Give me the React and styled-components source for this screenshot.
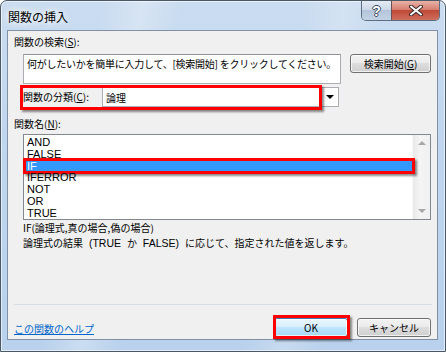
import styled, { createGlobalStyle } from "styled-components";

const Global = createGlobalStyle`
  html, body { margin: 0; padding: 0; }
  body {
    width: 446px;
    height: 352px;
    overflow: hidden;
    font-family: "Noto Sans CJK JP", "Liberation Sans", sans-serif;
    font-size: 10px;
    color: #000;
  }
`

const Window = styled.div`
  box-sizing: border-box;
  width: 446px;
  height: 352px;
  border: 1px solid #4a5868;
  border-radius: 7px 7px 0 0;
  background:
    linear-gradient(100deg, rgba(255,255,255,0) 20%, rgba(255,255,255,0.25) 28%, rgba(255,255,255,0) 36%, rgba(255,255,255,0) 60%, rgba(255,255,255,0.2) 68%, rgba(255,255,255,0) 76%),
    linear-gradient(180deg, #cadcf0 0%, #c0d6ee 40%, #b9d1ec 100%);
  display: flex;
  flex-direction: column;
  box-shadow: inset 0 0 0 1px rgba(255,255,255,0.6);
`

const TitleBar = styled.div`
  height: 29px;
  display: flex;
  padding-left: 7px;
`

const Title = styled.div`
  align-self: center;
  margin-top: 2px;
  font-size: 12px;
  text-shadow: 0 0 6px #fff, 0 0 10px #fff;
`

const CaptionButtons = styled.div`
  margin-left: auto;
  margin-right: 5px;
  display: flex;
  height: 19px;
  border: 1px solid #5e6e82;
  border-top: none;
  border-radius: 0 0 5px 5px;
  overflow: hidden;
`

const CaptionButton = styled.div`
  width: ${p => p.$w}px;
  display: flex;
  align-items: center;
  justify-content: center;
  background: ${p => p.$close
    ? "linear-gradient(180deg, #e8b3a8 0%, #d67f70 45%, #c04a38 50%, #cf6e5c 100%)"
    : "linear-gradient(180deg, #e3ebf5 0%, #cdd9e8 45%, #b4c5da 50%, #c3d3e6 100%)"};
  border-left: ${p => p.$close ? "1px solid #6b4f55" : "none"};
  color: #fff;
  font-family: "Liberation Sans", sans-serif;
  font-weight: bold;
  font-size: 14px;
  text-shadow: 1px 0 #3d4b5c, -1px 0 #3d4b5c, 0 1px #3d4b5c, 0 -1px #3d4b5c;
`

const Client = styled.div`
  flex: 1;
  margin: 0 7px 11px 6px;
  border: 1px solid #8090a5;
  background: #f0f0f0;
  display: flex;
  flex-direction: column;
  padding: 4px 6px 2px 6px;
`

const SectionLabel = styled.div`
  height: 13px;
  line-height: 13px;
  margin-top: ${p => p.$mt || 0}px;
`

const Indented = styled.div`
  margin-left: 9px;
  margin-top: ${p => p.$mt || 0}px;
  display: flex;
  position: relative;
`

const SearchBox = styled.div`
  box-sizing: border-box;
  width: 318px;
  height: 30px;
  background: #fff;
  border: 1px solid #abadb3;
  border-top-color: #8e9096;
  padding: 2px 3px;
  line-height: 13px;
  white-space: nowrap;
  letter-spacing: -0.25px;
  overflow: hidden;
`

const Button = styled.div`
  box-sizing: border-box;
  width: ${p => p.$w}px;
  height: ${p => p.$h || 19}px;
  margin-left: ${p => p.$ml || 0}px;
  border: 1px solid ${p => p.$default ? "#3c7fb1" : "#707070"};
  border-radius: 3px;
  background: ${p => p.$default
    ? "linear-gradient(180deg, #eaf6fd 0%, #d9f0fc 45%, #bee6fd 50%, #a7d9f5 100%)"
    : "linear-gradient(180deg, #f2f2f2 0%, #ebebeb 45%, #dddddd 50%, #cfcfcf 100%)"};
  box-shadow: inset 0 0 0 1px rgba(255,255,255,0.7);
  display: flex;
  align-items: center;
  justify-content: center;
  position: relative;
`

const Combo = styled.div`
  box-sizing: border-box;
  width: 237px;
  height: 20px;
  background: #fff;
  border: 1px solid #abadb3;
  display: flex;
  align-items: center;
  padding-left: 3px;
`

const ComboLabel = styled.div`
  width: 79px;
  height: 20px;
  line-height: 20px;
`

const DropArrow = styled.div`
  margin-left: auto;
  width: 14px;
  height: 16px;
  margin-right: 1px;
  display: flex;
  align-items: center;
  justify-content: center;
  &::after {
    content: "";
    border-left: 4px solid transparent;
    border-right: 4px solid transparent;
    border-top: 4px solid #000;
  }
`

const Annotation = styled.div`
  position: absolute;
  top: ${p => p.$t}px;
  left: ${p => p.$l}px;
  width: ${p => p.$w}px;
  height: ${p => p.$h}px;
  box-sizing: border-box;
  border: 3px solid #f00;
  box-shadow: 2px 2px 2px rgba(0,0,0,0.45);
  pointer-events: none;
`

const ListBox = styled.div`
  box-sizing: border-box;
  width: 408px;
  height: 86px;
  background: #fff;
  border: 1px solid #828790;
  display: flex;
`

const ListItems = styled.div`
  flex: 1;
  padding-top: 1px;
  font-family: "Liberation Sans", sans-serif;
  font-size: 11px;
`

const ListItem = styled.div`
  height: 11.8px;
  line-height: 12px;
  padding-left: 3px;
  position: relative;
  background: ${p => p.$selected ? "#3399ff" : "transparent"};
  color: ${p => p.$selected ? "#fff" : "#000"};
`

const ScrollBar = styled.div`
  width: 17px;
  background: linear-gradient(90deg, #e8e8e8, #f4f4f4 40%, #f0f0f0);
  border-left: 1px solid #f7f7f7;
  display: flex;
  flex-direction: column;
  justify-content: space-between;
  align-items: center;
  padding: 6px 0;
`

const ScrollArrow = styled.div`
  width: 0;
  height: 0;
  border-left: 4px solid transparent;
  border-right: 4px solid transparent;
  ${p => p.$down ? "border-top: 4px solid #a8a8a8;" : "border-bottom: 4px solid #a8a8a8;"}
`

const Description = styled.div`
  margin: 1px 0 0 9px;
  display: flex;
  flex-direction: column;
`

const DescLine = styled.div`
  height: 14.5px;
  line-height: 14.5px;
  white-space: nowrap;
`

const Latin = styled.span`
  font-family: "Liberation Sans", sans-serif;
  font-size: 10.5px;
  word-spacing: 3px;
`

const Spacer = styled.div`
  flex: 1;
`

const Separator = styled.div`
  height: 1px;
  background: #d5dfe5;
  margin-right: -1px;
`

const BottomRow = styled.div`
  margin-top: 13px;
  display: flex;
  align-items: center;
`

const HelpLink = styled.a`
  color: #0066cc;
  text-decoration: underline;
  margin-top: 1px;
  cursor: pointer;
`

const Buttons = styled.div`
  margin-left: auto;
  display: flex;
  gap: 9px;
`

const CloseIcon = () => (
  <svg width="14" height="11" viewBox="0 0 14 11">
    <path d="M2 1.5 L12 9.5 M12 1.5 L2 9.5" stroke="#3d2b2b" strokeWidth="4" strokeLinecap="round" />
    <path d="M2 1.5 L12 9.5 M12 1.5 L2 9.5" stroke="#fff" strokeWidth="2" strokeLinecap="round" />
  </svg>
)

const items = ["AND", "FALSE", "IF", "IFERROR", "NOT", "OR", "TRUE"]

export default function App() {
  return <>
    <Global />
    <Window>
      <TitleBar>
        <Title>関数の挿入</Title>
        <CaptionButtons>
          <CaptionButton $w={29}>?</CaptionButton>
          <CaptionButton $w={47} $close><CloseIcon /></CaptionButton>
        </CaptionButtons>
      </TitleBar>

      <Client>
        <SectionLabel>関数の検索(<u>S</u>):</SectionLabel>
        <Indented $mt={6}>
          <SearchBox>何がしたいかを簡単に入力して、[検索開始] をクリックしてください。</SearchBox>
          <Button $w={81} $h={19} $ml={9}>検索開始(<u>G</u>)</Button>
        </Indented>

        <Indented $mt={3}>
          <ComboLabel>関数の分類(<u>C</u>):</ComboLabel>
          <Combo>
            論理
            <DropArrow />
          </Combo>
          <Annotation $t={-2} $l={-3} $w={302} $h={25} />
        </Indented>

        <SectionLabel $mt={10}>関数名(<u>N</u>):</SectionLabel>
        <Indented $mt={4}>
          <ListBox>
            <ListItems>
              {items.map(name => (
                <ListItem key={name} $selected={name === "IF"}>
                  {name}
                  {name === "IF" && <Annotation $t={-2} $l={-1} $w={392} $h={16} />}
                </ListItem>
              ))}
            </ListItems>
            <ScrollBar>
              <ScrollArrow />
              <ScrollArrow $down />
            </ScrollBar>
          </ListBox>
        </Indented>

        <Description>
          <DescLine>IF(論理式,真の場合,偽の場合)</DescLine>
          <DescLine>論理式の結果<Latin> (TRUE </Latin>か<Latin> FALSE) </Latin>に応じて、指定された値を返します。</DescLine>
        </Description>

        <Spacer />
        <Separator />
        <BottomRow>
          <HelpLink>この関数のヘルプ</HelpLink>
          <Buttons>
            <Button $w={74} $default>
              OK
              <Annotation $t={-4} $l={-2} $w={77} $h={24} />
            </Button>
            <Button $w={74}>キャンセル</Button>
          </Buttons>
        </BottomRow>
      </Client>
    </Window>
  </>
}
